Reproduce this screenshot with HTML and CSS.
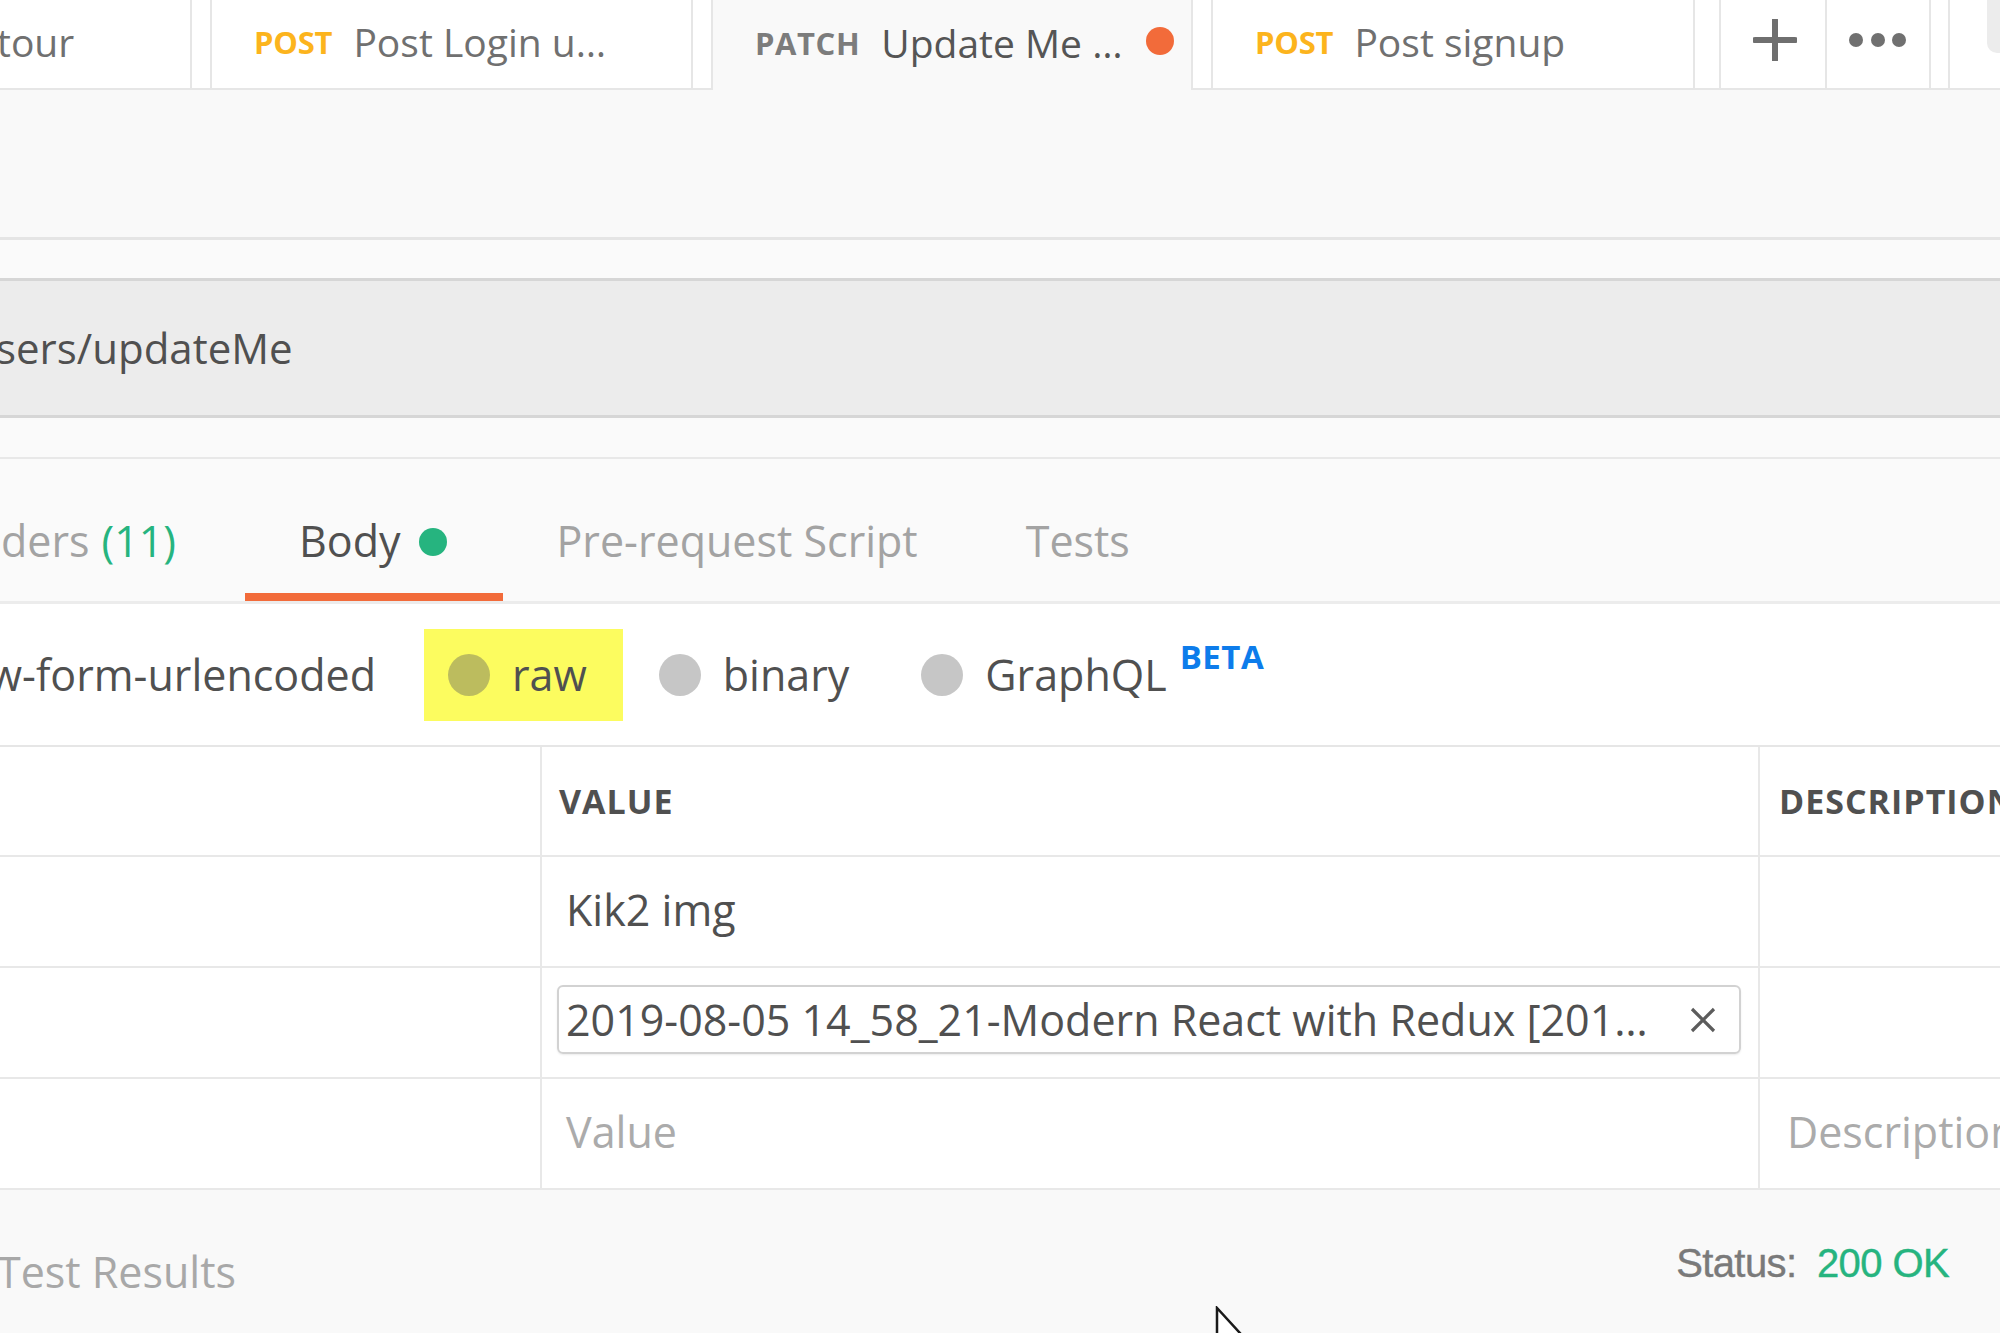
FILE: index.html
```html
<!DOCTYPE html>
<html>
<head>
<meta charset="utf-8">
<link rel="stylesheet" href="styles.css">
</head>
<body>
<div class="tabbar">
  <div class="tab tab-first"><span class="tname first-name">tour</span></div>
  <div class="tab tab-2"><span class="method post">POST</span><span class="tname">Post Login u…</span></div>
  <div class="tab tab-3 active"><span class="method patch">PATCH</span><span class="tname tname-active">Update Me …</span><span class="unsaved"></span></div>
  <div class="tab tab-4"><span class="method post">POST</span><span class="tname">Post signup</span></div>
  <div class="tab-actions">
    <div class="icon-btn btn-plus">
      <svg width="44" height="42" viewBox="0 0 44 42"><path d="M2 21H42M22 1V41" stroke="#6f6f6f" stroke-width="6" stroke-linecap="round" fill="none"/></svg>
    </div>
    <div class="icon-btn btn-dots">
      <svg width="58" height="16" viewBox="0 0 58 16"><circle cx="7" cy="8" r="7" fill="#707070"/><circle cx="29" cy="8" r="7" fill="#707070"/><circle cx="50" cy="8" r="7" fill="#707070"/></svg>
    </div>
  </div>
  <div class="env"><div class="env-box"></div></div>
</div>

<div class="name-area"></div>

<div class="url-section">
  <div class="url-bar"><span class="url-text">sers/updateMe</span></div>
</div>

<div class="req-tabs">
  <div class="clip-right headers-clip"><div class="rtab">Headers <span class="count">(11)</span></div></div>
  <div class="rtab active body-tab">Body<span class="green-dot"></span></div>
  <div class="rtab">Pre-request Script</div>
  <div class="rtab">Tests</div>
</div>

<div class="body-types">
  <div class="clip-right urlenc-clip"><div class="opt"><span class="radio"></span>x-www-form-urlencoded</div></div>
  <div class="opt hl"><span class="radio"></span>raw</div>
  <div class="opt"><span class="radio"></span>binary</div>
  <div class="opt"><span class="radio"></span>GraphQL<span class="beta">BETA</span></div>
</div>

<div class="kv">
  <div class="kv-row kv-head">
    <div class="cell"></div>
    <div class="cell cell-value head">VALUE</div>
    <div class="cell cell-desc head">DESCRIPTION</div>
  </div>
  <div class="kv-row">
    <div class="cell"></div>
    <div class="cell cell-value">Kik2 img</div>
    <div class="cell cell-desc"></div>
  </div>
  <div class="kv-row">
    <div class="cell"></div>
    <div class="cell cell-chip">
      <div class="file-chip">
        <span class="file-name">2019-08-05 14_58_21-Modern React with Redux [201…</span>
        <svg class="chip-x" width="26" height="26" viewBox="0 0 26 26"><path d="M2 2L24 24M24 2L2 24" stroke="#5c5c5c" stroke-width="3.2" fill="none"/></svg>
      </div>
    </div>
    <div class="cell cell-desc"></div>
  </div>
  <div class="kv-row">
    <div class="cell"></div>
    <div class="cell cell-value placeholder">Value</div>
    <div class="cell cell-desc placeholder desc-ph">Description</div>
  </div>
</div>

<div class="response">
  <div class="resp-tab">Test Results</div>
  <div class="status">Status: <span class="status-ok">200 OK</span></div>
</div>

<svg class="cursor" width="40" height="60" viewBox="0 0 40 60"><path d="M2 2V52L13 41L21 58L28 55L20 38H35Z" fill="#ffffff" stroke="#1a1a1a" stroke-width="2.5" stroke-linejoin="miter"/></svg>
</body>
</html>
```

FILE: styles.css
```css
* { box-sizing: border-box; margin: 0; padding: 0; }

html, body {
  width: 2000px;
  height: 1333px;
  overflow: hidden;
}

body {
  font-family: "Open Sans", "Liberation Sans", sans-serif;
  background: #f9f9f9;
  color: #505050;
  position: relative;
}

/* ---------- top tab bar ---------- */
.tabbar {
  display: flex;
  align-items: flex-start;
  height: 90px;
  background: #ffffff;
  border-bottom: 2px solid #e6e6e6;
}

.tab {
  height: 88px;
  display: flex;
  align-items: center;
  flex-shrink: 0;
  background: #ffffff;
  border-left: 2px solid #e6e6e6;
  border-right: 2px solid #e6e6e6;
  padding-left: 42px;
  margin-left: 18px;
  white-space: nowrap;
  overflow: hidden;
}

.tab-first {
  width: 192px;
  margin-left: 0;
  border-left: none;
  padding-left: 0;
}

.tab-2 { width: 483px; }
.tab-3 { width: 482px; }
.tab-4 { width: 484px; }

.tab.active {
  height: 90px;
  margin-bottom: -2px;
  background: #f9f9f9;
}

.method {
  font-weight: 700;
  font-size: 31px;
  line-height: 40px;
  margin-right: 21px;
  letter-spacing: -0.2px;
  margin-top: -4px;
}
.method.post { color: #fcb41d; }
.method.patch { color: #7c7c7c; letter-spacing: 0.6px; }

.tname {
  font-size: 39px;
  line-height: 52px;
  color: #707070;
  margin-top: -4px;
}
.first-name { margin-left: -3px; }
.tname-active { color: #555555; }

.unsaved {
  width: 28px;
  height: 28px;
  border-radius: 50%;
  background: #f26b3a;
  margin-left: 24px;
  margin-top: -8px;
}

.tab-actions {
  display: flex;
  margin-left: 24px;
  height: 88px;
}

.icon-btn {
  height: 88px;
  display: flex;
  align-items: center;
  justify-content: center;
  background: #ffffff;
  border-right: 2px solid #e6e6e6;
}
.btn-plus {
  width: 108px;
  border-left: 2px solid #e6e6e6;
}
.btn-plus svg { margin-top: -8px; margin-left: 4px; }
.btn-dots { width: 104px; }
.btn-dots svg { margin-top: -8px; }

.env {
  margin-left: 17px;
  height: 88px;
  flex: 1;
  border-left: 2px solid #e6e6e6;
  display: flex;
  align-items: flex-start;
  justify-content: flex-end;
}
.env-box {
  width: 13px;
  height: 53px;
  background: #ececec;
  border-bottom-left-radius: 10px;
}

/* ---------- request name strip ---------- */
.name-area {
  height: 150px;
  background: #f9f9f9;
  border-bottom: 3px solid #e5e5e5;
}

/* ---------- url bar ---------- */
.url-section {
  background: #fafafa;
  padding: 38px 0 39px;
  border-bottom: 2px solid #e8e8e8;
}
.url-bar {
  height: 140px;
  background: #ececec;
  border-top: 3px solid #d6d6d6;
  border-bottom: 3px solid #d6d6d6;
  display: flex;
  align-items: center;
}
.url-text {
  font-size: 42px;
  line-height: 56px;
  color: #505050;
  margin-left: -4px;
  white-space: nowrap;
}

/* ---------- request tabs ---------- */
.req-tabs {
  display: flex;
  height: 145px;
  background: #fafafa;
  border-bottom: 3px solid #ececec;
}
.clip-right {
  display: flex;
  justify-content: flex-end;
  flex-shrink: 0;
}
.headers-clip { width: 230px; }

.rtab {
  height: 142px;
  padding: 53px 54px 0;
  font-size: 43px;
  line-height: 58px;
  color: #a3a3a3;
  white-space: nowrap;
  display: flex;
  align-items: flex-start;
  flex-shrink: 0;
}
.rtab .count { color: #26b47f; margin-left: 12px; }
.rtab.active {
  color: #505050;
  border-bottom: 8px solid #f26b3a;
}
.body-tab { margin-left: 15px; padding-right: 56px; }
.green-dot {
  width: 28px;
  height: 28px;
  border-radius: 50%;
  background: #26b47f;
  margin-left: 18px;
  margin-top: 16px;
}

/* ---------- body types ---------- */
.body-types {
  display: flex;
  align-items: center;
  height: 141px;
  background: #ffffff;
}
.urlenc-clip { width: 412px; }
.opt {
  display: flex;
  align-items: center;
  height: 92px;
  padding: 0 36px 0 24px;
  margin-left: 12px;
  font-size: 43px;
  line-height: 58px;
  color: #505050;
  white-space: nowrap;
  flex-shrink: 0;
}
.urlenc-clip .opt { margin-left: 0; }
.opt .radio {
  width: 42px;
  height: 42px;
  border-radius: 50%;
  background: #c6c6c6;
  margin-right: 22px;
  flex-shrink: 0;
}
.opt.hl { background: #fcfc5f; }
.opt.hl .radio { background: #bcbc5e; }
.beta {
  font-size: 33px;
  font-weight: 700;
  line-height: 40px;
  color: #0d7ceb;
  margin-left: 13px;
  margin-bottom: 36px;
  letter-spacing: 0.5px;
}

/* ---------- key/value table ---------- */
.kv {
  background: #ffffff;
  border-top: 2px solid #e6e6e6;
}
.kv-row {
  display: grid;
  grid-template-columns: 542px 1218px 1fr;
  height: 111px;
  border-bottom: 2px solid #e8e8e8;
}
.kv-head { height: 110px; }
.cell {
  display: flex;
  align-items: center;
  border-right: 2px solid #e8e8e8;
  font-size: 43px;
  line-height: 58px;
  color: #505050;
  white-space: nowrap;
  overflow: hidden;
}
.cell-desc { border-right: none; padding-left: 19px; }
.cell-value { padding-left: 24px; }
.cell-value:not(.head):not(.placeholder) { padding-bottom: 4px; }
.head {
  font-size: 34px;
  font-weight: 700;
  letter-spacing: 1px;
  color: #505050;
}
.cell-value.head { padding-left: 17px; }
.placeholder { color: #ababab; padding-bottom: 4px; }
.desc-ph { padding-left: 27px; }

.cell-chip { padding: 0 17px 6px 15px; }
.file-chip {
  flex: 1;
  height: 69px;
  border: 2px solid #d2d2d2;
  border-radius: 6px;
  box-shadow: 0 1px 2px rgba(0,0,0,0.08);
  display: flex;
  align-items: center;
  justify-content: space-between;
  padding: 0 23px 0 7px;
  overflow: hidden;
}
.file-name {
  font-size: 43px;
  line-height: 58px;
  color: #505050;
  white-space: nowrap;
  overflow: hidden;
}
.chip-x { flex-shrink: 0; margin-left: 20px; }

/* ---------- response ---------- */
.response {
  height: 143px;
  background: #f9f9f9;
  display: flex;
  justify-content: space-between;
  align-items: flex-start;
  padding-right: 51px;
}
.resp-tab {
  margin-top: 53px;
  margin-left: -3px;
  font-size: 43px;
  line-height: 58px;
  color: #a8a8a8;
}
.status {
  margin-top: 50px;
  font-family: "Liberation Sans", Arial, sans-serif;
  font-size: 40px;
  line-height: 46px;
  color: #7a7a7a;
  letter-spacing: -0.6px;
  -webkit-text-stroke: 0.4px #7a7a7a;
}
.status-ok { color: #26b47f; margin-left: 10px; -webkit-text-stroke: 0.4px #26b47f; }

.cursor {
  position: absolute;
  left: 1215px;
  top: 1306px;
}
```
